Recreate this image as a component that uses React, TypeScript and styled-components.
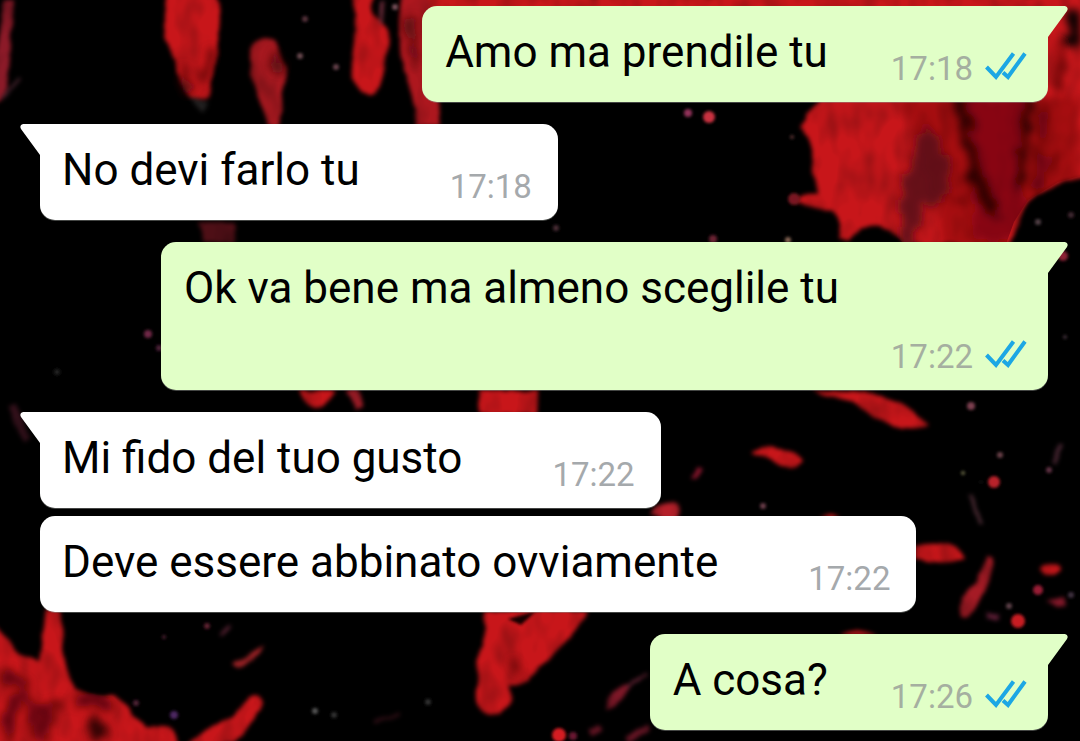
import React from "react";
import styled, { createGlobalStyle, css } from "styled-components";

const GlobalStyle = createGlobalStyle`
  *, *::before, *::after { box-sizing: border-box; }
  body { margin: 0; background: #000; font-family: Roboto, sans-serif; }
`;

const Page = styled.main`
  position: relative;
  min-height: 100vh;
  overflow: hidden;
  isolation: isolate;
`;

const Wallpaper = styled.svg`
  position: absolute;
  inset: 0;
  width: 100%;
  height: 100%;
  z-index: -1;
`;

const Conversation = styled.ol`
  list-style: none;
  margin: 0;
  padding: 6px 32px 10px 40px;
  display: flex;
  flex-direction: column;
  gap: 22px;
`;

const Group = styled.li<{ $outgoing: boolean }>`
  display: flex;
  flex-direction: column;
  align-items: ${(p) => (p.$outgoing ? "flex-end" : "flex-start")};
  gap: 8px;
`;

const Bubble = styled.article<{ $outgoing: boolean; $tail: boolean }>`
  position: relative;
  display: flex;
  flex-wrap: wrap;
  align-items: flex-start;
  max-width: 88%;
  padding: 20px ${(p) => (p.$outgoing ? 20 : 26)}px 7px ${(p) => (p.$outgoing ? 23 : 22)}px;
  border-radius: 15px;
  background: ${(p) => (p.$outgoing ? "#e1ffc7" : "#ffffff")};
  box-shadow: 0 1px 0 rgba(150, 155, 150, 0.45);
  ${(p) =>
    p.$tail &&
    (p.$outgoing
      ? css`border-top-right-radius: 0;`
      : css`border-top-left-radius: 0;`)}
`;

const Tail = styled.svg<{ $outgoing: boolean }>`
  position: absolute;
  top: 0;
  width: 21px;
  height: 33px;
  ${(p) =>
    p.$outgoing
      ? css`right: -20px; fill: #e1ffc7;`
      : css`left: -20px; fill: #ffffff; transform: scaleX(-1);`}
`;

const Text = styled.p`
  margin: 0;
  font-size: 44px;
  line-height: 52px;
  color: #000;
`;

const Meta = styled.footer<{ $outgoing: boolean }>`
  display: flex;
  align-items: center;
  gap: 12px;
  margin-left: auto;
  padding: 17px 0 0 ${(p) => (p.$outgoing ? 63 : 90)}px;
  font-size: 33px;
  line-height: 52px;
  color: ${(p) => (p.$outgoing ? "#a5afa0" : "#a5a9ac")};
`;

const TickIcon = styled.svg`
  width: 43px;
  height: 34px;
  fill: none;
  stroke: #1ca7e4;
  stroke-width: 4;
`;

const ReadTicks = () => (
  <TickIcon viewBox="0 0 43 34" role="img" aria-label="Letto">
    <path d="M1.500 15L11 25L28.500 1.500" />
    <path d="M18 20.500L23 25L40 1.500" />
  </TickIcon>
);

type Message = { text: string; time: string };
type Thread = { outgoing: boolean; messages: Message[] };

const threads: Thread[] = [
  { outgoing: true, messages: [{ text: "Amo ma prendile tu", time: "17:18" }] },
  { outgoing: false, messages: [{ text: "No devi farlo tu", time: "17:18" }] },
  { outgoing: true, messages: [{ text: "Ok va bene ma almeno sceglile tu", time: "17:22" }] },
  {
    outgoing: false,
    messages: [
      { text: "Mi fido del tuo gusto", time: "17:22" },
      { text: "Deve essere abbinato ovviamente", time: "17:22" },
    ],
  },
  { outgoing: true, messages: [{ text: "A cosa?", time: "17:26" }] },
];

const specks: [number, number, number, string][] = [
  [305, 19, 3, "#55303a"], [300, 56, 3, "#6b4a50"], [336, 67, 3, "#65404c"], [395, 7, 3, "#775058"],
  [688, 113, 4, "#93305a"], [709, 117, 6, "#c93040"], [792, 137, 2, "#533"], [794, 199, 6, "#7a1620"],
  [556, 228, 3, "#4a2c35"], [713, 239, 4, "#6a2030"], [788, 240, 3, "#865"], [1038, 222, 3, "#534047"],
  [1071, 215, 3, "#402830"], [1063, 256, 5, "#8c2036"], [1065, 337, 2, "#403038"], [148, 334, 4, "#702846"],
  [159, 348, 3, "#50203a"], [57, 372, 3, "#222"], [971, 406, 4, "#7d4050"], [1000, 455, 3, "#6a4048"],
  [963, 473, 2, "#664"], [981, 482, 1, "#333"], [994, 482, 6, "#b9202a"], [763, 506, 3, "#6b3d4a"],
  [1049, 470, 3, "#603045"], [1038, 590, 5, "#981c35"], [1009, 606, 3, "#5d4048"], [1018, 621, 7, "#c81c22"],
  [1071, 595, 3, "#403040"], [315, 711, 3, "#555"], [334, 715, 3, "#333"], [428, 702, 3, "#333"],
  [174, 715, 4, "#4b2560"], [207, 626, 3, "#612030"], [164, 637, 2, "#4c2030"], [136, 703, 3, "#502034"],
  [559, 735, 7, "#d51e22"], [573, 736, 4, "#6b1630"],
];

const BloodWallpaper = () => (
  <Wallpaper viewBox="0 0 1080 741" preserveAspectRatio="xMidYMid slice" aria-hidden="true">
    <defs>
      <filter id="blood" filterUnits="userSpaceOnUse" x="-10" y="-10" width="1100" height="761" colorInterpolationFilters="sRGB">
        <feTurbulence type="fractalNoise" baseFrequency="0.05" numOctaves="2" seed="4" result="edge" />
        <feDisplacementMap in="SourceGraphic" in2="edge" scale="6" xChannelSelector="R" yChannelSelector="G" result="rough" />
        <feGaussianBlur in="rough" stdDeviation="2" result="soft" />
        <feTurbulence type="fractalNoise" baseFrequency="0.05 0.03" numOctaves="2" seed="9" />
        <feColorMatrix values="0.5 0 0 0 0.7  0.5 0 0 0 0.7  0.5 0 0 0 0.7  0 0 0 0 1" result="mottle" />
        <feComposite in="soft" in2="mottle" operator="arithmetic" k1="1" k2="0" k3="0" k4="0" />
      </filter>
      <filter id="shade" filterUnits="userSpaceOnUse" x="0" y="0" width="1080" height="741">
        <feTurbulence type="fractalNoise" baseFrequency="0.07" numOctaves="2" seed="2" result="grain" />
        <feDisplacementMap in="SourceGraphic" in2="grain" scale="20" xChannelSelector="R" yChannelSelector="G" result="warped" />
        <feGaussianBlur in="warped" stdDeviation="4" />
      </filter>
      <filter id="soft">
        <feGaussianBlur stdDeviation="1.500" />
      </filter>
      <clipPath id="splatter">
        <path d="M430 0H1080V176L1058 182L1028 200L1014 222L1006 244L905 244L887 228L872 226L848 241L843 238L839 224L830 208L817 190L811 145L806 113L820 102Z" />
      </clipPath>
      <clipPath id="hand">
        <path d="M0 634L20 657L39 661L48 616L59 618L62 672L76 688L99 696L112 697L143 728L166 727L178 741L0 741Z" />
      </clipPath>
    </defs>
    <rect width="1080" height="741" fill="#000" />
    <g filter="url(#blood)" fill="#c8161a">
      <path d="M5 0L14 0Q11 32 9 60T2 100L-6 104V70Z" fill="#8c1a28" />
      <path d="M2 98L20 78" stroke="#40202a" strokeWidth="3" />
      <path d="M167 -5L216 -5Q222 12 219 32C216 58 215 78 209 98L190 99C181 90 180 76 174 60Q167 47 165 35Q162 14 167 -5Z" />
      <path d="M187 98L208 101L202 113Z" fill="#222020" />
      <path d="M250 58C251 37 270 32 278 47C280 59 288 70 286 84C282 98 279 112 280 126L268 126C266 108 250 92 250 58Z" fill="#a6181f" />
      <path d="M352 -5L374 -5Q369 13 382 22Q391 32 388 48C385 62 384 80 377 92Q368 100 358 89Q350 77 351 62C354 48 358 14 352 -5Z" />
      <path d="M383 0L381 24" stroke="#783040" strokeWidth="3" />
      <path d="M402 -5L430 -5L440 126L416 126C417 94 398 72 400 38Q397 15 402 -5Z" fill="#ad171e" />
      <path d="M430 -5H1090V176L1058 184Q1036 192 1024 208L1010 244L905 244Q897 231 882 227Q866 221 848 241L839 238Q844 222 832 212Q817 206 795 202Q801 191 817 193Q811 168 811 145Q806 131 801 127L806 113L820 102L800 60L430 20Z" />
      <path d="M198 222H235V243H204Z" fill="#4e0f16" />
      <path d="M299 390L334 390Q328 407 315 407Q304 402 299 390Z" />
      <path d="M345 391L357 390Q364 398 363 407L356 410Q353 397 345 391Z" fill="#981b25" />
      <path d="M478 390L538 390L537 414L480 414Z" />
      <path d="M812 390L852 392Q880 394 899 402Q915 413 928 424Q914 432 892 425Q871 417 856 402Q832 398 812 390Z" />
      <path d="M753 452Q762 445 777 450Q792 449 803 460Q800 470 781 466Q768 459 753 452Z" />
      <path d="M690 477L697 466L701 469L695 479Z" fill="#a21a35" />
      <path d="M650 515Q660 501 673 503Q684 505 675 520Z" fill="#b5202a" />
      <path d="M820 518Q830 510 840 518Z" />
      <path d="M914 546Q952 538 964 558Q948 567 914 558Z" />
      <path d="M988 556Q997 557 993 569C985 586 981 603 969 617Q957 620 960 609Q964 588 977 580Z" fill="#a51b25" />
      <path d="M972 494L981 525" stroke="#54303a" strokeWidth="3" />
      <path d="M1061 446L1054 464" stroke="#502a38" strokeWidth="4" />
      <ellipse cx="1051" cy="569" rx="10" ry="6" />
      <path d="M1047 600L1065 597L1067 605L1057 606Z" fill="#86182a" />
      <path d="M985 616L999 617" stroke="#64203a" strokeWidth="5" />
      <path d="M840 635Q862 626 876 636Z" />
      <path d="M-5 624L20 655L39 661L46 609L61 610C64 638 60 664 76 688Q91 698 114 695Q132 709 145 728Q158 724 170 727L180 746L-5 746Z" />
      <path d="M187 745L206 730Q222 721 234 716L248 698Q259 690 263 703Q259 717 245 730L233 745Z" />
      <path d="M233 664L265 645L260 655L238 669Z" fill="#a72428" />
      <path d="M220 635L231 626" stroke="#532030" strokeWidth="4" />
      <path d="M484 610L588 610Q577 631 561 646Q546 662 535 675Q521 687 508 684Q515 691 511 704Q501 718 488 715Q474 708 476 690Q481 681 477 669Q474 655 484 645Z" />
      <path d="M606 711Q605 696 619 688Q628 681 633 686Q621 703 606 711Z" fill="#7f1828" />
      <path d="M628 688L646 673" stroke="#622334" strokeWidth="3" />
      <path d="M590 732L600 727M625 741L649 728" stroke="#651524" strokeWidth="7" />
      <path d="M374 721L400 714" stroke="#351018" strokeWidth="3" />
      <path d="M12 404L22 430L28 440" stroke="#32101a" strokeWidth="8" fill="none" />
    </g>
    <g filter="url(#soft)">
      {specks.map(([x, y, r, fill]) => (
        <circle key={`${x}-${y}`} cx={x} cy={y} r={r} fill={fill} />
      ))}
    </g>
    <g clipPath="url(#splatter)">
      <g filter="url(#shade)">
        <path d="M900 96H1080V250H945L935 200Z" fill="#74090d" opacity="0.4" />
        <path d="M962 96H1024V240H975Z" fill="#74090d" opacity="0.6" />
        <path d="M925 116Q912 165 900 190L900 246L912 246L922 205L952 195L944 150Z" fill="#560b16" opacity="0.85" />
        <path d="M950 96L968 96L972 130L980 170L1000 206L998 222L985 212L970 180L962 140Z" fill="#240306" opacity="0.9" />
        <path d="M1022 96L1034 96L1026 170L1014 200L1018 150Z" fill="#250306" opacity="0.85" />
        <path d="M1044 100L1038 135M1050 110L1034 190M1060 150L1040 190M952 200L965 208M1062 40L1058 90" stroke="#530508" strokeWidth="7" opacity="0.8" />
        <path d="M1067 8L1090 14V48L1068 44Z" fill="#050203" />
      </g>
    </g>
    <g clipPath="url(#hand)">
      <g filter="url(#shade)" fill="none" stroke="#500609" opacity="0.85">
        <path d="M0 675Q26 680 24 692T10 700V745M42 745L44 712Q58 702 68 708M30 700L34 728M78 700L108 704" strokeWidth="10" />
        <ellipse cx="97" cy="730" rx="9" ry="14" fill="#1c0204" />
      </g>
    </g>
    <g filter="url(#shade)" fill="none" stroke="#45070b" opacity="0.8">
      <path d="M182 62L188 92M212 50L202 80" strokeWidth="8" />
      <path d="M276 56L280 72" strokeWidth="12" />
      <path d="M408 16L418 60" strokeWidth="8" />
      <path d="M520 668L510 662" strokeWidth="8" />
    </g>
    <g filter="url(#soft)">
      <path d="M508 619L536 611L521 625Z" fill="#150306" />
    </g>
  </Wallpaper>
);

const MessageBubble = ({ message, outgoing, tail }: { message: Message; outgoing: boolean; tail: boolean }) => (
  <Bubble $outgoing={outgoing} $tail={tail}>
    {tail && (
      <Tail $outgoing={outgoing} viewBox="0 0 21 33" aria-hidden="true">
        <path d="M0 0H18Q22 1 20 5L1 31V33H0Z" />
      </Tail>
    )}
    <Text>{message.text}</Text>
    <Meta $outgoing={outgoing}>
      <time dateTime={message.time}>{message.time}</time>
      {outgoing && <ReadTicks />}
    </Meta>
  </Bubble>
);

export default function App() {
  return (
    <>
      <GlobalStyle />
      <Page>
        <BloodWallpaper />
        <Conversation>
          {threads.map((thread, index) => (
            <Group key={index} $outgoing={thread.outgoing}>
              {thread.messages.map((message, position) => (
                <MessageBubble
                  key={message.text}
                  message={message}
                  outgoing={thread.outgoing}
                  tail={position === 0}
                />
              ))}
            </Group>
          ))}
        </Conversation>
      </Page>
    </>
  );
}
